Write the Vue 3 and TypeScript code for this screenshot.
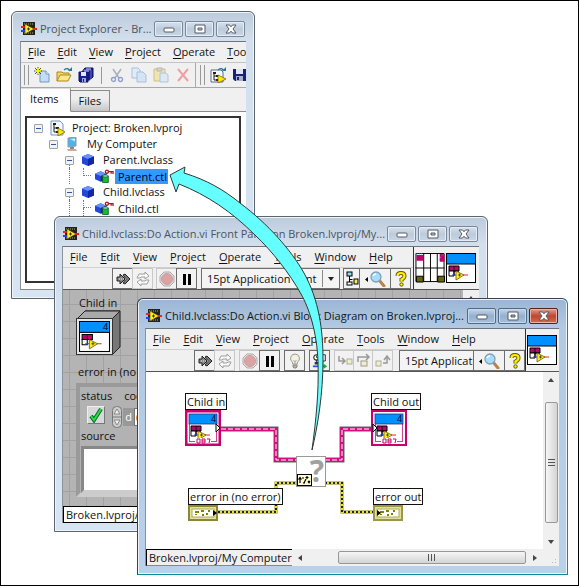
<script setup lang="ts">
interface TreeRow {
  label: string
  depth: number
  icon: string
  open: boolean
  selected?: boolean
  mid?: boolean
}

const menus: string[] = ['File', 'Edit', 'View', 'Project', 'Operate', 'Tools', 'Window', 'Help']
const projectMenus: string[] = menus.slice(0, 6)

const fileTools = [
  { name: 'New', icon: 'new' },
  { name: 'Open', icon: 'open' },
  { name: 'Save all', icon: 'saveall' },
]
const editTools = [
  { name: 'Cut', icon: 'cut' },
  { name: 'Copy', icon: 'copy' },
  { name: 'Paste', icon: 'paste' },
  { name: 'Delete', icon: 'delete' },
]

const tree: TreeRow[] = [
  { label: 'Project: Broken.lvproj', depth: 0, icon: 'project', open: true },
  { label: 'My Computer', depth: 1, icon: 'computer', open: true },
  { label: 'Parent.lvclass', depth: 2, icon: 'class', open: true },
  { label: 'Parent.ctl', depth: 3, icon: 'ctl', open: false, selected: true },
  { label: 'Child.lvclass', depth: 2, icon: 'class', open: true },
  { label: 'Child.ctl', depth: 3, icon: 'ctl', open: false, mid: true },
]
</script>

<template>
  <main class="desktop">
    <svg class="defs" aria-hidden="true">
      <symbol id="vi" viewBox="0 0 16 16">
        <rect x="2" y="1" width="12" height="13" fill="#222" />
        <path d="M3 3h10M3 12h10" stroke="#a8b070" stroke-dasharray="1 1" />
        <path d="M0 6h5" stroke="#e22" stroke-width="2" />
        <path d="M0 10h5" stroke="#24e" stroke-width="2" />
        <path d="M11 8h5" stroke="#e22" stroke-width="2" />
        <path d="M4 3l9 5-9 5z" fill="#ffee22" stroke="#554400" stroke-width=".6" />
        <path d="M6 8h3M7.500 6.500v3" stroke="#333" />
      </symbol>
      <symbol id="min" viewBox="0 0 12 10"><rect x="1" y="4" width="10" height="4" rx="1" fill="#fff" stroke="#555b66" /></symbol>
      <symbol id="max" viewBox="0 0 12 10"><path d="M1 1h10v8H1zM4 4h4v2H4z" fill="#fff" fill-rule="evenodd" stroke="#555b66" /></symbol>
      <symbol id="close" viewBox="0 0 12 10"><path d="M1 1h3.500L6 2.800 7.500 1H11L8 5l3 4H7.500L6 7.200 4.500 9H1l3-4z" fill="#fff" stroke="#555b66" /></symbol>

      <symbol id="new" viewBox="0 0 16 16">
        <path d="M6 4h6l3 3v8H6z" fill="#c3dcf8" stroke="#7898bc" /><path d="M12 4v3h3" fill="#fff" stroke="#7898bc" />
        <path d="M4 0v8M0 4h8M1 1l6 6M7 1L1 7" stroke="#222" stroke-width=".8" /><path d="M4 1v6M1 4h6" stroke="#ff0" stroke-width="1.600" />
      </symbol>
      <symbol id="open" viewBox="0 0 16 16">
        <path d="M1 14V5h5l1 1h6v3" fill="#f6d66a" stroke="#a98824" /><path d="M1 14l3-6h11l-3 6z" fill="#ffe78c" stroke="#a98824" />
        <path d="M8 3q4-3 6 1" fill="none" stroke="#257a98" stroke-width="1.300" /><path d="M12 4h4V0z" fill="#257a98" />
      </symbol>
      <symbol id="saveall" viewBox="0 0 16 16">
        <path d="M5 5V3l2-2h8v9l-2 2" fill="#182090" stroke="#0c1260" />
        <path d="M3 6V5l2-2h8v9l-2 2" fill="#182090" stroke="#8590d8" stroke-width=".7" />
        <path d="M1 5h9v10H2l-1-1z" fill="#182090" stroke="#0c1260" />
        <rect x="3" y="5" width="5" height="4" fill="#e4e8ff" /><path d="M4 11h4v4H4z" fill="#9aa4d8" /><path d="M5 12h1v3H5z" fill="#182090" /><path d="M8 2h5M6 4h5" stroke="#c8d0ff" />
      </symbol>
      <symbol id="save" viewBox="0 0 16 16">
        <path d="M1 2h13v12H3l-2-2z" fill="#182078" /><rect x="4" y="2" width="7" height="5" fill="#dfe3f8" /><rect x="4" y="9" width="7" height="5" fill="#a9b0c8" /><rect x="5" y="10" width="2" height="3" fill="#182078" />
      </symbol>
      <symbol id="cut" viewBox="0 0 16 16">
        <path d="M4 2l6 9M12 2L6 11" stroke="#a9b2bd" stroke-width="1.600" /><circle cx="4.500" cy="12.500" r="2" fill="none" stroke="#8f9fd0" stroke-width="1.300" /><circle cx="11.500" cy="12.500" r="2" fill="none" stroke="#8f9fd0" stroke-width="1.300" />
      </symbol>
      <symbol id="copy" viewBox="0 0 16 16">
        <path d="M1 1h6l2 2v8H1z" fill="#dfecf8" stroke="#a9bfda" /><path d="M6 5h6l3 3v7H6z" fill="#d3e4f6" stroke="#a9bfda" />
      </symbol>
      <symbol id="paste" viewBox="0 0 16 16">
        <path d="M1 2h11v12H1z" fill="#f0e5ae" stroke="#cbbf8c" /><path d="M4 1h5v3H4z" fill="#d6d6d6" stroke="#b5b5b5" /><path d="M7 6h6l2 2v7H7z" fill="#dbe8f6" stroke="#b0c2d8" />
      </symbol>
      <symbol id="delete" viewBox="0 0 16 16"><path d="M3 2l10 12M13 2L3 14" stroke="#f0a0a4" stroke-width="2" /></symbol>
      <symbol id="project" viewBox="0 0 16 16">
        <path d="M2 1h9l3 3v11H2z" fill="#f4f9ff" stroke="#7890c0" /><path d="M4 3h3v2H4zM7 7h3v2H7zM7 11h2v2H7z" fill="#222" /><path d="M5 5v7h3M5 8h3" fill="none" stroke="#222" />
        <path d="M9 8l7 4-7 4z" fill="#ffe900" stroke="#6a5c00" stroke-width=".7" />
      </symbol>
      <symbol id="projtool" viewBox="0 0 16 16">
        <path d="M1 3h10l2 2v10H1z" fill="#f4f9ff" stroke="#668" /><path d="M3 5h3v2H3zM6 8h3v2H6zM6 12h2v2H6z" fill="#222" /><path d="M4 7v6h3M4 9h3" fill="none" stroke="#222" />
        <path d="M8 8l8 4-8 4z" fill="#ffe900" stroke="#6a5c00" stroke-width=".7" /><path d="M8 3q4-3 6 1" fill="none" stroke="#257a98" stroke-width="1.300" /><path d="M12 4h4V0z" fill="#257a98" />
      </symbol>
      <symbol id="computer" viewBox="0 0 12 14">
        <path d="M2 1l8-1v9l-8 1z" fill="#48b5ee" stroke="#8d9aa5" /><path d="M4 2l5-.5v3z" fill="#c8f0ff" /><path d="M4 10h4v2H4z" fill="#888" /><path d="M1 12h9l1 2H2z" fill="#c8ad9e" />
      </symbol>
      <symbol id="class" viewBox="0 0 12 12">
        <path d="M6 0l6 2.500v7L6 12 0 9.500v-7z" fill="#2447d8" /><path d="M6 0l6 2.500L6 5 0 2.500z" fill="#6b91ff" /><path d="M6 5l6-2.500v7L6 12z" fill="#1228a0" />
      </symbol>
      <symbol id="ctl" viewBox="0 0 20 14">
        <path d="M6 2l6 2.500v6L6 13 0 10.500v-6z" fill="#2447d8" /><path d="M6 2l6 2.500L6 7 0 4.500z" fill="#6b91ff" /><path d="M6 7l6-2.500v6L6 13z" fill="#1228a0" />
        <path d="M8 7h6v7H8z" fill="#18b838" stroke="#064b14" stroke-width=".8" /><ellipse cx="11" cy="7" rx="3" ry="1.200" fill="#8cf09a" stroke="#064b14" stroke-width=".6" />
        <circle cx="12.500" cy="2.500" r="1.600" fill="none" stroke="#a01520" stroke-width="1.400" /><path d="M14 2.500h5v2.500M17 2.500v2" fill="none" stroke="#a01520" stroke-width="1.300" />
      </symbol>

      <symbol id="run" viewBox="0 0 16 16">
        <path d="M2 6h3V3l5 5-5 5v-3H2z" fill="#888" stroke="#222" /><path d="M8 4l2-1 5 5-5 5-2-1 3-4z" fill="#777" stroke="#222" /><path d="M4 8h8" stroke="#eee" stroke-dasharray="1 1" />
      </symbol>
      <symbol id="cont" viewBox="0 0 16 16">
        <path d="M2 7l2-4h6V1l4 4-4 3V6H6L5 7zM14 9l-2 4H6v2l-4-4 4-3v2h4l1-1z" fill="#fafafa" stroke="#9d9d9d" />
      </symbol>
      <symbol id="abort" viewBox="0 0 16 16">
        <path d="M5 1h6l4 4v6l-4 4H5l-4-4V5z" fill="#e9e0e0" stroke="#aaa" /><circle cx="8" cy="8" r="5.500" fill="#dda2a2" stroke="#c8a0a0" />
      </symbol>
      <symbol id="pause" viewBox="0 0 16 16"><path d="M4 3h3v11H4zM9 3h3v11H9z" fill="#000" /></symbol>
      <symbol id="bulb" viewBox="0 0 16 16">
        <path d="M8 1a4.500 4.500 0 0 1 2.500 8.200V11h-5V9.200A4.500 4.500 0 0 1 8 1z" fill="#f4f1dd" stroke="#999" /><path d="M6.500 7L8 9l1.500-2M8 9v2" fill="none" stroke="#aaa" /><path d="M6 12h4v2l-1 1H7l-1-1z" fill="#b6b09a" stroke="#888" />
      </symbol>
      <symbol id="retain" viewBox="0 0 18 16">
        <circle cx="5" cy="4" r="3" fill="#fff" stroke="#222" stroke-width="1.200" /><path d="M5 2v2h2" fill="none" stroke="#222" /><path d="M10 1h5v7h-5z" fill="#eee" stroke="#222" /><path d="M5 7v4M8 5h2M12 8v4" stroke="#222" /><path d="M3 9h4v3H3zM9 10h3v2H9z" fill="#333" />
        <path d="M1 14h9" stroke="#25d" stroke-width="2" /><path d="M9 14h6" stroke="#1a3" stroke-width="2" /><path d="M13 11l4 3-4 3z" fill="#1a3" />
      </symbol>
      <symbol id="into" viewBox="0 0 16 16"><path d="M2 3v5h5M5 5l3 3-3 3" fill="none" stroke="#999" stroke-width="1.500" /><rect x="10" y="6" width="5" height="5" fill="#f4efc0" stroke="#aaa" /></symbol>
      <symbol id="over" viewBox="0 0 16 16"><path d="M2 9V4h11M10 1l3 3-3 3" fill="none" stroke="#999" stroke-width="1.500" /><rect x="5" y="8" width="6" height="5" fill="#f4efc0" stroke="#999" /></symbol>
      <symbol id="out" viewBox="0 0 16 16"><rect x="1" y="8" width="5" height="5" fill="#f4efc0" stroke="#aaa" /><path d="M8 10h4V4M9 7l3-4 3 4" fill="none" stroke="#999" stroke-width="1.500" /></symbol>
      <symbol id="align" viewBox="0 0 14 16">
        <rect x="2" y="1" width="5" height="4" fill="#8fd8f0" stroke="#000" /><path d="M4.500 5v6M4.500 8.500h3" stroke="#000" /><rect x="2" y="11" width="5" height="3" fill="#fff" stroke="#000" /><rect x="9" y="8" width="4" height="5" fill="#f5e860" stroke="#000" />
      </symbol>
      <symbol id="search" viewBox="0 0 22 16">
        <path d="M4 6v5L1 8.500z" fill="#000" /><path d="M15 9l5 6" stroke="#b8844a" stroke-width="3" stroke-linecap="round" /><circle cx="12" cy="6" r="5" fill="#a7dcfb" stroke="#7f9fc0" stroke-width="1.300" /><path d="M9 5q1-2 3-2" fill="none" stroke="#fff" stroke-width="1.500" />
      </symbol>
      <symbol id="help" viewBox="0 0 12 16">
        <path d="M2.500 5Q2.500 2 6 2t3.500 3Q9.500 7 6.500 8.500V10.500" fill="none" stroke="#5f5800" stroke-width="4" /><path d="M2.500 5Q2.500 2 6 2t3.500 3Q9.500 7 6.500 8.500V10.500" fill="none" stroke="#ffee00" stroke-width="2.200" /><circle cx="6.500" cy="13.500" r="1.700" fill="#ffee00" stroke="#5f5800" />
      </symbol>

      <symbol id="glyph" viewBox="0 0 20 16">
        <path d="M1 1h10v5H1z" fill="#c0006c" stroke="#000" /><path d="M1 6h5v5H1zM6 1v10M6 6h5" fill="#fff" stroke="#000" />
        <path d="M4 10h4" stroke="#24e" /><path d="M15 10h5" stroke="#e22" /><path d="M8 6l8 4-8 5z" fill="#ffe920" stroke="#6a5c00" stroke-width=".8" /><path d="M10 10h3M11.500 8.500v3" stroke="#333" stroke-width=".8" />
      </symbol>
      <symbol id="viicon" viewBox="0 0 30 30">
        <rect x=".5" y=".5" width="29" height="29" fill="#fff" stroke="#000" /><rect x="1" y="1" width="28" height="10" fill="#0090ff" /><path d="M1 11h28" stroke="#000" /><use href="#glyph" x="2" y="12" width="20" height="16" />
      </symbol>
      <symbol id="conn" viewBox="0 0 30 31">
        <path d="M.5.500h29v29H.5zM8.500 0v30M15.500 0v30M22.500 0v30M0 15.500h30" fill="#fff" stroke="#000" />
        <path d="M1 2h7v6H1zM25 1h5v8h-5z" fill="#c0006c" /><path d="M1 24h7v6H1zM23 24h7v6h-7z" fill="#6a6608" stroke="#000" /><path d="M0 1h8M23 8l6-7" stroke="#1cb8c8" stroke-dasharray="1 1" />
      </symbol>
      <symbol id="objterm" viewBox="0 0 36 36">
        <rect x="1" y="1" width="34" height="34" fill="#fff" stroke="#c8006c" stroke-width="2" />
        <rect x="4.500" y="4.500" width="27" height="27" fill="#fff" stroke="#d04090" /><rect x="4" y="4" width="28" height="10" fill="#0090ff" stroke="#203880" stroke-width=".8" />
        <use href="#glyph" x="5" y="15" width="20" height="16" /><rect x="10" y="28" width="16" height="6" fill="#fff" />
        <path d="M12 29h3v4h-3zM17 29v4h3v-4zM17 31h3M22 29h3l-1 4" fill="none" stroke="#c8006c" />
      </symbol>
      <symbol id="errterm" viewBox="0 0 30 16">
        <rect x="1" y="1" width="28" height="14" fill="#e4e0a0" stroke="#9a9848" stroke-width="2" /><rect x="4" y="4" width="22" height="8" fill="#fff" stroke="#b0ac50" /><path d="M7 6h4v2H7zM13 5h3v2h-3zM18 8h2v2h-2zM7 9h2v1H7zM14 9h2v2h-2zM20 5h2v2h-2z" fill="#858200" />
      </symbol>
    </svg>

    <section class="window w1" aria-label="Project Explorer">
      <header class="title">
        <svg class="i16"><use href="#vi" /></svg>
        <h2>Project Explorer - Br...</h2>
        <button class="cap" aria-label="Minimize"><svg><use href="#min" /></svg></button>
        <button class="cap" aria-label="Maximize"><svg><use href="#max" /></svg></button>
        <button class="cap" aria-label="Close"><svg><use href="#close" /></svg></button>
      </header>
      <div class="body">
        <nav class="menu">
          <button v-for="m in projectMenus" :key="m"><u>{{ m[0] }}</u>{{ m.slice(1) }}</button>
        </nav>
        <div class="ptools">
          <i class="grip"></i>
          <button v-for="t in fileTools" :key="t.icon" :aria-label="t.name"><svg class="i16"><use :href="'#' + t.icon" /></svg></button>
          <i class="sep"></i>
          <button v-for="t in editTools" :key="t.icon" :aria-label="t.name"><svg class="i16"><use :href="'#' + t.icon" /></svg></button>
          <i class="edge"></i>
          <i class="grip"></i>
          <button aria-label="Project"><svg class="i16"><use href="#projtool" /></svg></button>
          <button aria-label="Save"><svg class="i16"><use href="#save" /></svg></button>
        </div>
        <div class="tabs">
          <button class="tab on">Items</button>
          <button class="tab">Files</button>
          <i class="rest"></i>
        </div>
        <div class="page">
          <ul class="tree">
            <li v-for="r in tree" :key="r.label" :class="['row', 'd' + r.depth, { leaf: !r.open, mid: r.mid }]">
              <button v-if="r.open" class="box" :aria-label="'Collapse ' + r.label"></button>
              <i v-else class="branch"></i>
              <svg :class="['ti', r.icon]"><use :href="'#' + r.icon" /></svg>
              <span :class="{ sel: r.selected }">{{ r.label }}</span>
            </li>
          </ul>
        </div>
      </div>
    </section>

    <section class="window w2" aria-label="Front Panel">
      <header class="title">
        <svg class="i16"><use href="#vi" /></svg>
        <h2>Child.lvclass:Do Action.vi Front Panel on Broken.lvproj/My...</h2>
        <button class="cap" aria-label="Minimize"><svg><use href="#min" /></svg></button>
        <button class="cap" aria-label="Maximize"><svg><use href="#max" /></svg></button>
        <button class="cap" aria-label="Close"><svg><use href="#close" /></svg></button>
      </header>
      <div class="body">
        <div class="head">
          <div class="bars">
            <nav class="menu"><button v-for="m in menus" :key="m"><u>{{ m[0] }}</u>{{ m.slice(1) }}</button></nav>
            <div class="tools">
              <div class="group">
                <button class="tb" aria-label="Run"><svg class="i16"><use href="#run" /></svg></button>
                <button class="tb off" aria-label="Run continuously"><svg class="i16"><use href="#cont" /></svg></button>
              </div>
              <div class="group">
                <button class="tb off" aria-label="Abort"><svg class="i16"><use href="#abort" /></svg></button>
                <button class="tb" aria-label="Pause"><svg class="i16"><use href="#pause" /></svg></button>
              </div>
              <button class="font">15pt Application Font<i class="drop"></i></button>
              <div class="group">
                <button class="tb slim" aria-label="Align objects"><svg class="i14"><use href="#align" /></svg></button>
                <button class="tb wide" aria-label="Search"><svg class="i22"><use href="#search" /></svg></button>
                <button class="tb" aria-label="Context help"><svg class="i12"><use href="#help" /></svg></button>
              </div>
            </div>
          </div>
          <div class="icons">
            <svg class="i30"><use href="#conn" /></svg>
            <svg class="i30"><use href="#viicon" /></svg>
          </div>
        </div>
        <div class="panel">
          <div class="controls">
            <span class="name">Child in</span>
            <svg class="cube" viewBox="0 0 45 45">
              <path d="M1 9L9 1h35v36l-8 8z" fill="#777" stroke="#222" /><path d="M1 9L9 1h35l-8 8z" fill="#aaa" stroke="#222" /><rect x=".5" y="8.500" width="36" height="36" fill="#e6e6e6" stroke="#333" />
              <use href="#viicon" x="3" y="11" width="31" height="31" />
              <text x="27" y="20" font-size="9">4</text>
            </svg>
            <span class="name err">error in (no error)</span>
            <div class="cluster">
              <div class="pair">
                <div class="field">
                  <span>status</span>
                  <button class="status" aria-label="status"><svg viewBox="0 0 16 16"><path d="M3 9l3 4 7-11" fill="none" stroke="#064" stroke-width="4" /><path d="M3 9l3 4 7-11" fill="none" stroke="#2fe02f" stroke-width="2" /></svg></button>
                </div>
                <div class="field">
                  <label for="code">code</label>
                  <div class="num">
                    <svg class="spin" viewBox="0 0 10 22"><rect x=".5" y=".5" width="9" height="21" rx="4" fill="#ccc" stroke="#777" /><path d="M2 8l3-5 3 5zM2 14h6l-3 5z" fill="#eee" stroke="#777" stroke-width=".8" /><path d="M0 11h10" stroke="#777" /></svg>
                    <b>d</b><input id="code" value="0" />
                  </div>
                </div>
              </div>
              <label for="source">source</label>
              <textarea id="source"></textarea>
            </div>
          </div>
          <div class="vscroll"><i class="up"></i></div>
        </div>
        <footer class="foot"><span class="path">Broken.lvproj/My Computer</span></footer>
      </div>
    </section>

    <section class="window w3" aria-label="Block Diagram">
      <header class="title">
        <svg class="i16"><use href="#vi" /></svg>
        <h2>Child.lvclass:Do Action.vi Block Diagram on Broken.lvproj...</h2>
        <button class="cap" aria-label="Minimize"><svg><use href="#min" /></svg></button>
        <button class="cap" aria-label="Maximize"><svg><use href="#max" /></svg></button>
        <button class="cap red" aria-label="Close"><svg><use href="#close" /></svg></button>
      </header>
      <div class="body">
        <div class="head">
          <div class="bars">
            <nav class="menu"><button v-for="m in menus" :key="m"><u>{{ m[0] }}</u>{{ m.slice(1) }}</button></nav>
            <div class="tools">
              <div class="group">
                <button class="tb" aria-label="Run"><svg class="i16"><use href="#run" /></svg></button>
                <button class="tb off" aria-label="Run continuously"><svg class="i16"><use href="#cont" /></svg></button>
              </div>
              <div class="group">
                <button class="tb off" aria-label="Abort"><svg class="i16"><use href="#abort" /></svg></button>
                <button class="tb" aria-label="Pause"><svg class="i16"><use href="#pause" /></svg></button>
              </div>
              <button class="tb" aria-label="Highlight execution"><svg class="i16"><use href="#bulb" /></svg></button>
              <button class="tb" aria-label="Retain wire values"><svg class="i16"><use href="#retain" /></svg></button>
              <div class="group">
                <button class="tb off" aria-label="Step into"><svg class="i16"><use href="#into" /></svg></button>
                <button class="tb off" aria-label="Step over"><svg class="i16"><use href="#over" /></svg></button>
                <button class="tb off" aria-label="Step out"><svg class="i16"><use href="#out" /></svg></button>
              </div>
              <div class="group fill">
                <button class="font cut">15pt Application Font</button>
                <button class="tb wide" aria-label="Search"><svg class="i22"><use href="#search" /></svg></button>
                <button class="tb" aria-label="Context help"><svg class="i12"><use href="#help" /></svg></button>
              </div>
            </div>
          </div>
          <div class="icons one"><svg class="i30"><use href="#viicon" /></svg></div>
        </div>
        <div class="work">
          <div class="diagram">
            <svg class="wires" viewBox="0 0 397 177">
              <g fill="none">
                <g stroke="#666" stroke-width="5"><path d="M75 57h55v31h20M179 88h17V57h30" /></g>
                <g stroke="#d0107c" stroke-width="4"><path d="M75 57h55v31h20M179 88h17V57h30" /></g>
                <g stroke="#fff" stroke-width="1" stroke-dasharray="5 2"><path d="M75 57h55v31h20M179 88h17V57h30" /></g>
                <g stroke="#8a8500" stroke-width="3"><path d="M72 140h58v-29h20M179 111h17v29h31" /></g>
                <g stroke="#e8e020" stroke-width="2"><path d="M72 140h58v-29h20M179 111h17v29h31" /></g>
                <g stroke="#222" stroke-width="2" stroke-dasharray="2 2"><path d="M72 140h58v-29h20M179 111h17v29h31" /></g>
              </g>
            </svg>
            <div class="node n1"><span>Child in</span><svg class="obj" viewBox="0 0 36 36"><use href="#objterm" /><rect x="1" y="1" width="34" height="34" fill="none" stroke="#c8006c" stroke-width="3" /><text x="26" y="12" font-size="9">4</text><path d="M31 14l4 4-4 4z" fill="#fff" stroke="#000" /></svg></div>
            <div class="node n2"><span>Child out</span><svg class="obj" viewBox="0 0 36 36"><use href="#objterm" /><text x="26" y="12" font-size="9">4</text><path d="M2 14l4 4-4 4z" fill="#fff" stroke="#000" /></svg></div>
            <div class="node n3"><span>error in (no error)</span><svg class="er" viewBox="0 0 30 16"><use href="#errterm" /><rect x="1" y="1" width="28" height="14" fill="none" stroke="#8a8830" stroke-width="2" /><path d="M25 5l4 3-4 3z" fill="#000" /></svg></div>
            <div class="node n4"><span>error out</span><svg class="er" viewBox="0 0 30 16"><use href="#errterm" /><path d="M4 5l4 3-4 3z" fill="#000" /></svg></div>
            <div class="node sub">
              <b>?</b>
              <svg viewBox="0 0 15 12"><rect x=".5" y=".5" width="14" height="11" fill="#fffbd0" stroke="#000" /><path d="M3 9V4M1.500 5.500L3 3.500l1.500 2M5 4h2M7 9l2-4M10 2v3M8.500 3.500h3M11 7l2 2M13 7l-2 2M6 9h2" fill="none" stroke="#000" stroke-width="1.200" /></svg>
            </div>
          </div>
          <div class="vscroll"><i class="up"></i><i class="vthumb"></i><i class="down"></i></div>
        </div>
        <footer class="foot">
          <span class="path">Broken.lvproj/My Computer</span>
          <div class="hscroll"><i class="left"></i><i class="hthumb"></i><i class="right"></i></div>
          <i class="corner"></i>
        </footer>
      </div>
    </section>

    <svg class="arrow" viewBox="0 0 579 586">
      <path d="M170 175L185 167L184 173C207 180 224 190 240 203C268 224 291 250 304 273C319 300 323 330 323 360C323 393 318 425 312 450C316 420 319 392 318 362C317 332 309 308 301 294C290 274 272 251 255 235C232 212 207 195 179 184L176 192Z" fill="#66ffff" stroke="#303838" stroke-width="1" />
    </svg>
  </main>
</template>

<style>
body { margin: 0; }
</style>

<style scoped>
.desktop {
  position: relative; box-sizing: border-box; min-height: 586px; overflow: hidden;
  background: #fff; border: 1px solid #000; color: #111;
  font: 11px/16px "Open Sans", "Noto Sans", sans-serif;
}
.desktop *, .desktop *::before, .desktop *::after { box-sizing: border-box; }
.defs { position: absolute; width: 0; height: 0; }
button { font: inherit; color: inherit; padding: 0; border: 0; background: none; white-space: nowrap; }
i { display: block; flex: none; }
svg { display: block; flex: none; }
text { font-family: "Open Sans", sans-serif; fill: #001; }
.i16 { width: 16px; height: 16px; }
.i14 { width: 14px; height: 16px; }
.i12 { width: 12px; height: 16px; }
.i22 { width: 22px; height: 16px; }
.i30 { width: 30px; height: 30px; }

.window {
  position: absolute; display: flex; flex-direction: column; padding: 0 8px 8px 7px;
  border: 1px solid #5c6670; border-radius: 6px 6px 0 0; box-shadow: inset 0 0 0 1px #eef4fa;
  background: linear-gradient(#bccbdd, #d3dfec 28px, #d7e4f2);
}
.w1 { left: 10px; top: 10px; width: 244px; height: 288px; padding-left: 8px; }
.w2 { left: 53px; top: 215px; width: 434px; height: 316px; }
.w3 { left: 136px; top: 297px; width: 431px; height: 277px; border-color: #39434d; border-right-color: #108898; border-bottom-color: #108898; background: linear-gradient(#9bb5d3, #b2c9e3 28px, #b9d1ea); }
.title { display: flex; align-items: flex-end; gap: 2px; height: 29px; flex: none; padding: 0 1px 4px; }
.title h2 { flex: 1; min-width: 0; margin: 0 0 0 1px; font: inherit; color: #4c545e; white-space: nowrap; }
.w3 .title h2 { color: #101820; }
.cap { display: flex; align-items: center; justify-content: center; width: 29px; height: 16px; border: 1px solid #7a8796; border-radius: 2px; background: linear-gradient(#d6e1ed, #bccbdb 50%, #c9d6e5); box-shadow: inset 0 0 0 1px #e4ecf5; flex: none; }
.cap svg { width: 12px; height: 10px; }
.w3 .cap { background: linear-gradient(#c4d6ea, #93b0cf 50%, #a5c1de); border-color: #526a86; box-shadow: inset 0 0 0 1px #c6d8ea; }
.w3 .cap.red { background: linear-gradient(#e0a090, #c04530 50%, #d2704c); border-color: #5a2020; box-shadow: inset 0 0 0 1px #e8b4a4; }
.body { flex: 1; min-height: 0; display: flex; flex-direction: column; background: #f0f0f0; border-top: 1px solid #6c757e; border-left: 1px solid #8a929a; overflow: hidden; }
.menu { display: flex; gap: 13px; height: 20px; padding-left: 7px; overflow: hidden; }
.menu u { text-underline-offset: 2px; }
.w1 .menu { border-bottom: 1px solid #c4c4c4; height: 21px; gap: 12px; }

.ptools { display: flex; align-items: center; height: 25px; border-bottom: 1px solid #a8a8a8; gap: 6px; padding-left: 3px; overflow: hidden; flex: none; }
.grip { width: 5px; height: 20px; border-left: 1px solid #999; border-right: 1px solid #999; }
.ptools > .grip + button { margin-left: -1px; }
.sep { width: 1px; height: 17px; background: #999; margin: 0 1px; }
.edge { width: 1px; height: 25px; background: #aaa; margin: 0 -2px; }
.tabs { display: flex; align-items: flex-end; height: 24px; flex: none; }
.tab { height: 22px; padding: 0 8px; border: 1px solid #8c8c8c; border-width: 1px 1px 1px 0; background: linear-gradient(#eee 40%, #c6c6c6); }
.tab.on { height: 24px; padding: 0 11px 2px 9px; background: #fdfdfd; border-top-color: #ddd; border-bottom-color: #fdfdfd; }
.rest { flex: 1; border-bottom: 1px solid #8c8c8c; }
.page { flex: 1; display: flex; padding: 4px 5px 6px 4px; background: #fff; border-bottom: 1px solid #888; }
.tree { flex: 1; margin: 0; padding: 2px 0 0 7px; list-style: none; background: #fff; border: 2px solid #333; overflow: hidden; }
.row { position: relative; display: flex; align-items: center; height: 16px; white-space: nowrap; }
.d1 { padding-left: 15px; }
.d2 { padding-left: 31px; }
.d3 { padding-left: 48px; }
.box { width: 9px; height: 9px; border: 1px solid #9aa4ae; border-radius: 1px; background: linear-gradient(#2b58a8, #2b58a8) center / 5px 1px no-repeat #f2f2f2; flex: none; }
.branch { position: relative; width: 13px; height: 16px; }
.branch::before { content: ""; position: absolute; left: 1px; top: 0; width: 8px; height: 8px; border-left: 1px dotted #777; border-bottom: 1px dotted #777; }
.mid .branch::after { content: ""; position: absolute; left: 1px; top: 8px; height: 8px; border-left: 1px dotted #777; }
.row.leaf::before, .d2::after { content: ""; position: absolute; left: 35px; top: 0; height: 16px; border-left: 1px dotted #777; }
.d2::after { top: 13px; height: 3px; }
.ti { width: 16px; height: 16px; margin: 0 5px 0 6px; }
.ti.project { margin-right: 7px; }
.ti.computer { width: 12px; height: 14px; margin: 0 9px 0 8px; }
.ti.class { width: 12px; height: 12px; margin: 0 9px 0 8px; }
.ti.ctl { width: 19px; height: 14px; margin: 0 1px 0 0; }
.leaf span { padding: 0 1px 0 3px; line-height: 15px; }
.sel { background: #3399ff; color: #001; }

.head { display: flex; height: 43px; flex: none; border-bottom: 1px solid #555; }
.bars { flex: 1; min-width: 0; }
.tools { display: flex; align-items: center; gap: 4px; height: 22px; border-top: 1px solid #d0d0d0; padding-left: 50px; }
.w3 .tools { padding-left: 49px; gap: 5px; }
.group { display: flex; }
.group.fill { flex: 1; min-width: 0; margin-left: 1px; }
.tb { display: flex; align-items: center; justify-content: center; width: 21px; height: 21px; border: 1px solid #6e6e6e; margin-left: -1px; background: #f2f2f2; flex: none; }
.tb.off { border-color: #c8c8c8; }
.tb.off + .tb.off { margin-left: -2px; }
.tb.slim { width: 17px; }
.tb.wide { width: 32px; }
.font { display: flex; align-items: center; justify-content: space-between; width: 139px; height: 21px; padding-left: 5px; border: 1px solid #6e6e6e; background: #f4f4f4; overflow: hidden; }
.font.cut { flex: 1; width: auto; min-width: 0; }
.drop { width: 17px; height: 17px; border-left: 1px solid #888; position: relative; }
.drop::after { content: ""; position: absolute; left: 5px; top: 7px; border: 3px solid transparent; border-top: 4px solid #222; border-bottom: 0; }
.icons { display: flex; gap: 1px; width: 66px; padding: 6px 0 0 1px; border-left: 1px solid #333; }
.icons.one { width: 34px; }

.panel { flex: 1; min-height: 0; display: flex; background-color: #b4b4b4; background-image: linear-gradient(#a2a2a2 1px, transparent 1px), linear-gradient(90deg, #a2a2a2 1px, transparent 1px); background-size: 17px 17px; background-position: 6px 14px; }
.controls { flex: 1; min-width: 0; padding: 6px 0 0 13px; }
.name { display: block; padding-left: 3px; height: 14px; line-height: 14px; }
.name.err { margin-top: 10px; padding-left: 2px; }
.cube { width: 45px; height: 45px; }
.cluster { display: flex; flex-direction: column; margin-top: 4px; width: 240px; height: 114px; border: 4px solid #9a9a9a; border-right-color: #ddd; border-bottom-color: #ccc; background: #b2b2b2; padding: 1px 1px 0; }
.cluster textarea { flex: 1; resize: none; border: 3px solid #888; border-bottom-color: #ccc; background: #fff; margin: 2px 0 0; }
.pair { display: flex; gap: 12px; }
.field { display: flex; flex-direction: column; gap: 2px; }
.status { width: 18px; height: 18px; margin-left: 6px; background: #d8d8d8; border: 1px solid #777; border-top-color: #eee; border-left-color: #eee; }
.status svg { width: 16px; height: 16px; }
.num { display: flex; align-items: center; height: 22px; margin-left: -12px; }
.num .spin { width: 10px; height: 22px; }
.num b { padding: 0 2px; margin-left: 1px; background: #999; color: #fff; font-weight: 400; line-height: 18px; }
.num input { width: 40px; height: 18px; border: 1px solid #777; font: inherit; padding: 0 1px; }

.vscroll { display: flex; flex-direction: column; align-items: center; width: 16px; padding: 6px 0 5px; background: #f0f0f0; flex: none; }
.up { border: 3px solid transparent; border-bottom: 4px solid #444; border-top: 0; }
.down { border: 3px solid transparent; border-top: 4px solid #444; border-bottom: 0; }
.vthumb { flex: 1; width: 13px; margin: 20px 0 17px; border: 1px solid #989898; border-radius: 2px; background: repeating-linear-gradient(#555 0 1px, transparent 1px 3px) center / 7px 8px no-repeat, linear-gradient(90deg, #f6f6f6, #d4d4d4); }
.foot { display: flex; height: 17px; flex: none; background: #f0f0f0; }
.path { width: 146px; border: 1px solid #000; border-right: 0; padding-left: 2px; line-height: 15px; white-space: nowrap; overflow: hidden; background: #fff; }
.w3 .path { background: #f0f0f0; border-bottom-color: #888; }
.hscroll { flex: 1; display: flex; align-items: center; padding: 0 5px 0 6px; }
.left { border: 3px solid transparent; border-right: 4px solid #444; border-left: 0; }
.right { border: 3px solid transparent; border-left: 4px solid #444; border-right: 0; }
.hthumb { flex: 1; height: 13px; margin: 0 7px 0 36px; border: 1px solid #989898; border-radius: 2px; background: repeating-linear-gradient(90deg, #555 0 1px, transparent 1px 3px) center / 8px 7px no-repeat, linear-gradient(#f6f6f6, #d4d4d4); }
.corner { width: 17px; background: radial-gradient(#bbb 1px, transparent 1px) right 2px bottom 2px / 3px 3px; clip-path: polygon(90% 40%, 90% 90%, 40% 90%); }

.work { flex: 1; min-height: 0; display: flex; }
.diagram { position: relative; flex: 1; background: #fff; }
.wires { position: absolute; left: 0; top: 0; width: 397px; height: 177px; }
.node { position: absolute; }
.node span { display: block; width: max-content; height: 17px; line-height: 15px; padding: 0 1px; border: 1px solid #111; background: #fff; }
.obj { width: 36px; height: 36px; }
.er { width: 30px; height: 16px; }
.n1 { left: 39px; top: 21px; }
.n2 { left: 225px; top: 21px; }
.n3 { left: 42px; top: 116px; }
.n4 { left: 227px; top: 116px; }
.sub { left: 150px; top: 84px; width: 30px; height: 31px; border: 1px solid #999; background: #fff; }
.sub b { position: absolute; right: 1px; top: 1px; font-size: 30px; line-height: 26px; color: #a0a0a0; }
.sub svg { position: absolute; left: 0; bottom: 0; width: 15px; height: 12px; }
.arrow { position: absolute; left: -1px; top: -1px; width: 579px; height: 586px; pointer-events: none; }
</style>
